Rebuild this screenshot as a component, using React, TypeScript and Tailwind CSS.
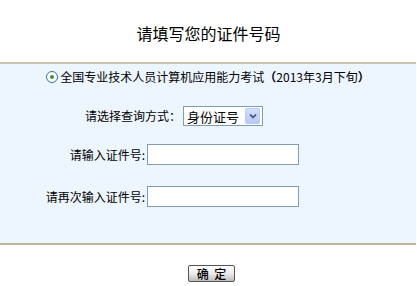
import React from "react";

const font = { fontFamily: '"Noto Sans CJK SC", "Liberation Sans", sans-serif' };

export default function App() {
  return (
    <div className="w-[417px] h-[286px] bg-white text-black" style={font}>
      <div className="h-[62px] flex items-center justify-center pt-[4px]">
        <span className="text-[16px] leading-[16px] tracking-[0px]">请填写您的证件号码</span>
      </div>
      <div className="w-[416px] h-[183px] bg-[#edf5fe] border-t-2 border-b-2 border-t-[#cbc4ae] border-b-[#bfb49a] flex flex-col">
        <div className="h-[20px] mt-[3px] flex items-center justify-center">
          <span className="w-[12px] h-[12px] rounded-full border border-[#3c6d9c] bg-white flex items-center justify-center mr-[2px]">
            <span className="w-[4px] h-[4px] rounded-full bg-[#2f9b2f]" />
          </span>
          <span className="text-[12px] leading-[12px]">全国专业技术人员计算机应用能力考试<b>（</b>2013年3月下旬<b>）</b></span>
        </div>
        <div className="h-[20px] mt-[19px] flex items-center">
          <span className="w-[181px] text-right text-[12px] leading-[12px]">请选择查询方式：</span>
          <div className="ml-[2px] w-[80px] h-[20px] border border-[#7f9db9] bg-white flex items-center justify-between pl-[3px] pr-[2px]">
            <span className="text-[13px] leading-[13px]">身份证号</span>
            <span className="w-[15px] h-[16px] rounded-[2px] border border-[#b8cbf5] bg-gradient-to-b from-[#d3e0fd] to-[#b6c9f5] flex items-center justify-center">
              <svg width="8" height="6" viewBox="0 0 8 6">
                <path d="M1 1.5 L4 4.5 L7 1.5" fill="none" stroke="#4d6185" strokeWidth="1.8" />
              </svg>
            </span>
          </div>
        </div>
        <div className="h-[21px] mt-[18px] flex items-center">
          <span className="w-[146px] text-right text-[12px] leading-[12px] pr-[1px]">请输入证件号:</span>
          <div className="ml-[1px] w-[152px] h-[21px] border border-[#7f9db9] bg-white" />
        </div>
        <div className="h-[21px] mt-[21px] flex items-center">
          <span className="w-[146px] text-right text-[12px] leading-[12px] pr-[1px]">请再次输入证件号:</span>
          <div className="ml-[1px] w-[152px] h-[21px] border border-[#7f9db9] bg-white" />
        </div>
      </div>
      <div className="flex justify-center pt-[20px] pl-[6px]">
        <div className="w-[47px] h-[17px] rounded-[2px] border border-[#555] bg-gradient-to-b from-[#ffffff] via-[#ececec] to-[#bdbdbd] flex items-center justify-center">
          <span className="text-[12px] leading-[12px] font-medium whitespace-pre">确  定</span>
        </div>
      </div>
    </div>
  );
}
